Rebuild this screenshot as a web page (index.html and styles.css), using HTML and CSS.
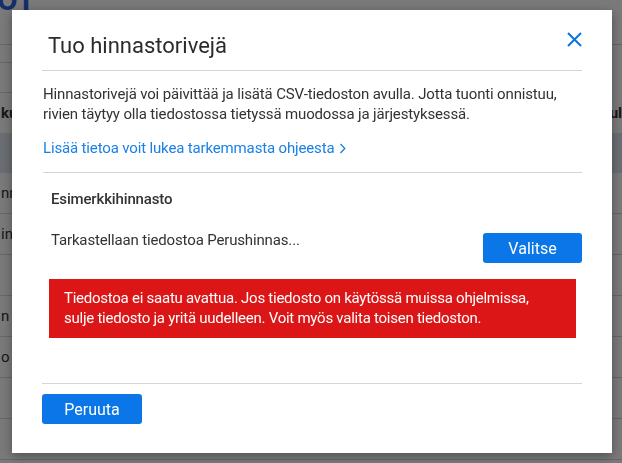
FILE: index.html
```html
<!DOCTYPE html>
<html lang="fi">
<head>
<meta charset="utf-8">
<title>Tuo hinnastorivejä</title>
<link rel="stylesheet" href="styles.css">
</head>
<body>

<div class="page">
  <div class="page-head"><span class="page-title">OT</span></div>
  <div class="toolbar"><div class="search"></div></div>
  <div class="row head"><span class="left">ku</span><span class="right">ul</span></div>
  <div class="row band"></div>
  <div class="row"><span class="left">nn</span></div>
  <div class="row"><span class="left">in</span></div>
  <div class="row"></div>
  <div class="row"><span class="left">n</span></div>
  <div class="row"><span class="left">o</span></div>
  <div class="row"></div>
  <div class="row"></div>
</div>

<div class="backdrop"></div>

<div class="dialog">
  <div class="dlg-head">
    <h1 class="dlg-title">Tuo hinnastorivejä</h1>
    <svg class="close" width="15" height="15" viewBox="0 0 15 15">
      <path d="M1 1 L14 14 M14 1 L1 14" stroke="#0b74e3" stroke-width="2" fill="none"/>
    </svg>
  </div>

  <p class="intro">Hinnastorivejä voi päivittää ja lisätä CSV-tiedoston avulla. Jotta tuonti onnistuu, rivien täytyy olla tiedostossa tietyssä muodossa ja järjestyksessä.</p>
  <a class="more" href="#">Lisää tietoa voit lukea tarkemmasta ohjeesta
    <svg class="chev" width="7" height="11" viewBox="0 0 7 11"><path d="M1.5 1 L5.8 5.5 L1.5 10" stroke="#1a80e6" stroke-width="1.3" fill="none"/></svg></a>

  <div class="sample">
    <div class="sample-name">Esimerkkihinnasto</div>
    <div class="file-row">
      <span class="file-name">Tarkastellaan tiedostoa Perushinnas...</span>
      <button class="btn">Valitse</button>
    </div>
    <div class="error">Tiedostoa ei saatu avattua. Jos tiedosto on käytössä muissa ohjelmissa, sulje tiedosto ja yritä uudelleen. Voit myös valita toisen tiedoston.</div>
  </div>

  <div class="dlg-foot">
    <button class="btn cancel">Peruuta</button>
  </div>
</div>

</body>
</html>
```

FILE: styles.css
```css
body { margin: 0; background: #fff; font-family: "Roboto", "Noto Sans", sans-serif; overflow: hidden; }

/* page behind the dialog */
.page { width: 622px; height: 463px; color: #333; font-size: 15px; }
.page-head { height: 45px; border-bottom: 1px solid #d8d8d8; box-sizing: border-box; overflow: hidden; }
.page-title { display: block; margin: -15px 0 0 -3px; font-size: 30px; font-weight: bold; color: #2f62d9; line-height: 1; }
.toolbar { height: 48px; padding-top: 17px; box-sizing: border-box; }
.search { width: 200px; height: 31px; border-top: 1px solid #d8d8d8; border-bottom: 1px solid #d8d8d8; box-sizing: border-box; }
.row { height: 41px; display: flex; align-items: center; justify-content: space-between; border-bottom: 1px solid #d8d8d8; box-sizing: border-box; }
.row.head { height: 40px; font-weight: bold; border-bottom: none; }
.row.band { height: 40px; background: #dde5ee; border-bottom: none; }
.row .left { padding-left: 1px; }

.backdrop { position: fixed; left: 0; top: 0; right: 0; bottom: 0; background: rgba(0,0,0,0.52); }

/* dialog */
.dialog { position: absolute; left: 12px; top: 10px; width: 600px; height: 443px; box-sizing: border-box;
          background: #fff; padding: 22px 30px 0 30px; box-shadow: 0 3px 10px rgba(0,0,0,0.35);
          font-size: 15px; line-height: 19.5px; letter-spacing: -0.15px; color: #333; }

.dlg-head { display: flex; justify-content: space-between; align-items: flex-start;
            padding: 0 0 10px 6px; border-bottom: 1px solid #cfd6de; }
.dlg-title { margin: 0; font-size: 22px; font-weight: normal; line-height: 28px; letter-spacing: 0; color: #2b2b2b; }
.close { display: block; }

.intro { margin: 14px 0 0 1px; }
.more { display: block; margin: 15px 0 0 1px; padding-bottom: 13px; border-bottom: 1px solid #cfd6de;
        color: #1a80e6; text-decoration: none; }
.chev { vertical-align: -1px; margin-left: 1px; }

.sample { padding-left: 9px; }
.sample-name { margin-top: 17px; font-weight: 500; }
.file-row { display: flex; justify-content: space-between; align-items: flex-start; margin-top: 22px; }
.btn { width: 99px; height: 30px; border: none; border-radius: 3px; background: #0b76e8; color: #fff;
       font-family: inherit; font-size: 16px; padding: 0; }
.file-row .btn { margin-top: 2px; }

.error { margin: 16px 6px 0 -2px; padding: 10px 15px 10px 15px; background: #dc1616; color: #fff; letter-spacing: -0.25px; }

.dlg-foot { margin-top: 45px; padding-top: 10px; border-top: 1px solid #d6d6d6; }
.cancel { width: 100px; }
```
